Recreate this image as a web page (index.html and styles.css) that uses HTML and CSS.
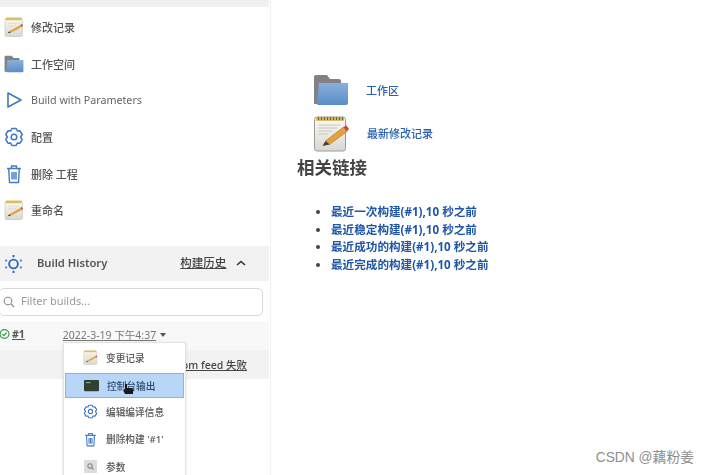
FILE: index.html
```html
<!DOCTYPE html>
<html lang="zh">
<head>
<meta charset="utf-8">
<title>Jenkins</title>
<link rel="stylesheet" href="styles.css">
</head>
<body>
<svg class="defs" width="0" height="0" aria-hidden="true">
  <defs>
    <linearGradient id="folderFront" x1="0" y1="0" x2="0" y2="1"><stop offset="0" stop-color="#8ab0dc"/><stop offset="1" stop-color="#5a8cc8"/></linearGradient>
    <linearGradient id="paper" x1="0" y1="0" x2="0" y2="1"><stop offset="0" stop-color="#fbfaf2"/><stop offset="1" stop-color="#d8d8d4"/></linearGradient>
    <symbol id="note" viewBox="0 0 36 38">
      <rect x="1" y="3" width="33" height="34" rx="3" fill="url(#paper)" stroke="#b8b8b4"/>
      <rect x="2" y="1" width="31" height="5" rx="1.5" fill="#d9bf68"/>
      <path d="M6 12h22M6 17h16" stroke="#d4d4cf" stroke-width="1.2"/>
      <path d="M9 27 L30 15 L33 19 L12 30 Z" fill="#e5a23c"/>
      <path d="M30 15 L33 19 L35 17 L33 13 Z" fill="#cf4a3c"/>
      <path d="M9 27 L12 30 L6 31 Z" fill="#4a3a2a"/>
    </symbol>
    <symbol id="bignote" viewBox="0 0 36 38">
      <rect x="1" y="3" width="31" height="34" rx="2.5" fill="url(#paper)" stroke="#9a9a96"/>
      <rect x="2.5" y="3" width="28" height="4" fill="#d9bf68"/>
      <path d="M5 3v3M8 3v3M11 3v3M14 3v3M17 3v3M20 3v3M23 3v3M26 3v3M29 3v3" stroke="#6f6238" stroke-width="1.2"/>
      <path d="M5 11h22M5 14h19M5 17h14M5 20h9" stroke="#c6c6c2"/>
      <path d="M12 27 L30 13 L33.5 17.5 L16 30.5 Z" fill="#e5a23c" stroke="#a9742a" stroke-width=".6"/>
      <path d="M30 13 L33.5 17.5 L35.5 15 L33 11.5 Z" fill="#d5423a"/>
      <path d="M12 27 L16 30.5 L9 32 Z" fill="#4a3a2a"/>
    </symbol>
    <symbol id="folder" viewBox="0 0 36 32">
      <path d="M1 30 V3 q0 -2 2 -2 H14 l3 4 H26 q2 0 2 2 V30 Z" fill="#828285"/>
      <path d="M4 30 L6 9 H35 L35 29 q0 2 -2 2 H5 Z" fill="url(#folderFront)"/>
    </symbol>
    <symbol id="gear" viewBox="0 0 20 20">
      <path d="M7.8 1.6 H12.2 L13.3 4 L16 3.8 L18.2 7.5 L16.6 10 L18.2 12.5 L16 16.2 L13.3 16 L12.2 18.4 H7.8 L6.7 16 L4 16.2 L1.8 12.5 L3.4 10 L1.8 7.5 L4 3.8 L6.7 4 Z" fill="none" stroke="#3f78c4" stroke-width="1.5" stroke-linejoin="round"/>
      <circle cx="10" cy="10" r="2.8" fill="none" stroke="#3f78c4" stroke-width="1.5"/>
    </symbol>
    <symbol id="trash" viewBox="0 0 16 20">
      <path d="M1 4.5 H15 M5.5 4.5 V2 H10.5 V4.5 M2.7 4.5 L3.5 18.5 H12.5 L13.3 4.5 M6 8 V15.5 M8 8 V15.5 M10 8 V15.5" fill="none" stroke="#3f78c4" stroke-width="1.4" stroke-linejoin="round"/>
    </symbol>
  </defs>
</svg>
<div class="page">
  <aside class="sidebar">
    <div class="topbar"></div>
    <nav class="tasks">
      <div class="task"><svg class="task-icon"><use href="#note"/></svg><span>修改记录</span></div>
      <div class="task"><svg class="task-icon"><use href="#folder"/></svg><span>工作空间</span></div>
      <div class="task"><svg class="task-icon" viewBox="0 0 20 20"><path d="M4 3 L17 10 L4 17 Z" fill="none" stroke="#3f78c4" stroke-width="1.6" stroke-linejoin="round"/></svg><span class="latin">Build with Parameters</span></div>
      <div class="task"><svg class="task-icon"><use href="#gear"/></svg><span>配置</span></div>
      <div class="task"><svg class="task-icon"><use href="#trash"/></svg><span>删除 工程</span></div>
      <div class="task"><svg class="task-icon"><use href="#note"/></svg><span>重命名</span></div>
    </nav>
    <section class="history">
      <header class="history-head">
        <svg class="history-icon" viewBox="0 0 20 20">
          <circle cx="10" cy="10" r="4.6" fill="none" stroke="#2f6cb8" stroke-width="2"/>
          <path d="M10 0.5v2.5M10 17v2.5M1.5 6l1.5 .8M17 6.8l1.5 -.8M1.5 14l1.5 -.8M17 13.2l1.5 .8" stroke="#2f6cb8" stroke-width="2"/>
        </svg>
        <strong class="history-title">Build History</strong>
        <a class="history-link">构建历史</a>
        <svg class="chevron" viewBox="0 0 10 6"><path d="M1 5 L5 1.5 L9 5" fill="none" stroke="#333" stroke-width="1.6"/></svg>
      </header>
      <div class="filter">
        <svg class="search" viewBox="0 0 12 12"><circle cx="5" cy="5" r="3.8" fill="none" stroke="#8a8a8a" stroke-width="1.1"/><path d="M8 8 L11 11" stroke="#8a8a8a" stroke-width="1.1"/></svg>
        <span class="filter-text">Filter builds...</span>
      </div>
      <div class="build-row">
        <svg class="check" viewBox="0 0 12 12"><circle cx="6" cy="6" r="4.8" fill="none" stroke="#3a9a4a" stroke-width="1.3"/><path d="M3.6 6.2 L5.3 7.8 L8.4 4.4" fill="none" stroke="#3a9a4a" stroke-width="1.3"/></svg>
        <a class="build-num">#1</a>
        <a class="build-date">2022-3-19 下午4:37</a>
        <span class="caret"></span>
      </div>
      <div class="feed-row"><a>Atom feed 失败</a></div>
      <div class="menu">
        <div class="menu-item"><svg class="menu-icon"><use href="#note"/></svg><span>变更记录</span></div>
        <div class="menu-item active">
          <svg class="menu-icon" viewBox="0 0 16 12"><rect width="16" height="12" rx="1" fill="#2f4030"/><path d="M2 3h5" stroke="#9fc79f"/></svg>
          <span>控制台输出</span>
          <svg class="cursor" viewBox="0 0 12 12"><path d="M3 1h2v4h5q1 0 1 1v5H3L1 7l2-1Z" fill="#1a1a1a"/></svg>
        </div>
        <div class="menu-item"><svg class="menu-icon"><use href="#gear"/></svg><span>编辑编译信息</span></div>
        <div class="menu-item"><svg class="menu-icon"><use href="#trash"/></svg><span>删除构建 '#1'</span></div>
        <div class="menu-item"><svg class="menu-icon" viewBox="0 0 14 14"><rect x="1" y="1" width="12" height="12" fill="#dcdcdc"/><circle cx="6.5" cy="6.5" r="2" fill="none" stroke="#888"/><path d="M8 8l2 2" stroke="#888"/></svg><span>参数</span></div>
      </div>
    </section>
  </aside>
  <main class="content">
    <div class="link-row folder-row"><svg class="big-folder"><use href="#folder"/></svg><a>工作区</a></div>
    <div class="link-row note-row"><svg class="big-note"><use href="#bignote"/></svg><a>最新修改记录</a></div>
    <h2 class="related">相关链接</h2>
    <ul class="permalinks">
      <li><a>最近一次构建(#1),10 秒之前</a></li>
      <li><a>最近稳定构建(#1),10 秒之前</a></li>
      <li><a>最近成功的构建(#1),10 秒之前</a></li>
      <li><a>最近完成的构建(#1),10 秒之前</a></li>
    </ul>
  </main>
</div>
<div class="watermark">CSDN @藕粉姜</div>
</body>
</html>
```
FILE: styles.css
```css
* { box-sizing: border-box; }
html, body { margin: 0; height: 100%; overflow: hidden; background: #fff; }
body { font-family: "Noto Sans", "Noto Sans CJK SC", sans-serif; color: #333; }
.defs { position: absolute; }
.page { display: flex; width: 710px; height: 475px; overflow: hidden; filter: blur(0.6px); }

.sidebar { position: relative; width: 271px; flex: none; border-right: 1px solid #f2f2f2; }
.topbar { height: 7px; background: #f0f0f0; margin-right: 1px; }
.tasks { display: flex; flex-direction: column; padding-top: 2px; height: 239px; }
.task { display: flex; align-items: center; height: 36.6px; padding-left: 4px; font-size: 11px; font-weight: 500; color: #555; gap: 7px; }
.task-icon { width: 20px; height: 20px; flex: none; }
.latin { font-size: 10.7px; font-weight: 400; color: #666; }

.history { position: relative; }
.history-head { display: flex; align-items: center; height: 35px; background: #f2f2f2; padding-left: 4px; margin-right: 1px; }
.history-icon { width: 19px; height: 20px; flex: none; }
.history-title { font-size: 11.2px; font-weight: 600; color: #555; margin: -3px 0 0 14px; }
.history-link { font-size: 11.5px; font-weight: 500; color: #444; text-decoration: underline; margin: -3px 0 0 73px; }
.chevron { width: 10px; height: 6px; margin: -2px 0 0 10px; }
.filter { display: flex; align-items: center; gap: 6px; height: 28px; width: 264px; margin: 7px 0 6px -1px; padding-left: 3px; border: 1.5px solid #d8d8d8; border-radius: 5px; background: #fff; font-size: 11px; color: #999; }
.filter-text { margin-top: -3px; }
.search { width: 12px; height: 12px; flex: none; }
.build-row { display: flex; align-items: center; height: 28px; padding-left: 0; background: #f8f8f8; margin-right: 1px; font-size: 10.5px; }
.check { width: 11px; height: 12px; flex: none; margin: -4px 0 0 -1px; }
.build-num { font-weight: 700; color: #555; text-decoration: underline; margin: -4px 0 0 2px; }
.build-date { margin: -4px 0 0 38px; color: #777; text-decoration: underline; }
.caret { width: 0; height: 0; margin: -3px 0 0 4px; border: 3.5px solid transparent; border-top: 4px solid #555; border-bottom: 0; }
.feed-row { display: flex; justify-content: flex-end; align-items: center; height: 29px; padding-right: 22px; background: #f2f2f2; margin-right: 1px; font-size: 10.5px; color: #444; }
.feed-row a { font-weight: 500; text-decoration: underline; }

.menu { position: absolute; left: 63px; top: 96px; width: 123px; height: 140px; background: #fff; border: 1px solid #e2e2e2; padding-top: 1px; box-shadow: 0 1px 3px rgba(0,0,0,.1); }
.menu-item { position: relative; display: flex; align-items: center; gap: 8px; height: 27.3px; padding-left: 19px; font-size: 9.7px; font-weight: 500; color: #555; }
.menu-item.active { margin: 2px 1px 0; padding-left: 18px; height: 25px; background: #b8d6f8; border: 1px solid #86b5ea; color: #2c4a70; }
.menu-icon { width: 15px; height: 15px; flex: none; }
.cursor { position: absolute; left: 56px; top: 9px; width: 12px; height: 12px; }

.content { flex: 1; padding: 68px 0 0 26px; }
.link-row { display: flex; align-items: center; gap: 17px; font-size: 11px; font-weight: 500; color: #2a60b0; }
.folder-row { height: 44px; padding-left: 16px; }
.note-row { height: 42px; padding-left: 16px; }
.big-folder { width: 36px; height: 32px; }
.big-note { width: 37px; height: 38px; }
.related { margin: 1px 0 0; font-size: 17.5px; line-height: 24px; font-weight: 700; color: #444; }
.permalinks { margin: 24px 0 0; padding: 0 0 0 34px; font-size: 11.6px; line-height: 17.6px; color: #1f56a8; font-weight: 700; }
.permalinks li::marker { color: #444; }

.watermark { position: absolute; right: 16px; bottom: 9px; font-family: "Liberation Sans", "Noto Sans CJK SC", sans-serif; font-size: 13.8px; color: #8f8f8f; }
```
